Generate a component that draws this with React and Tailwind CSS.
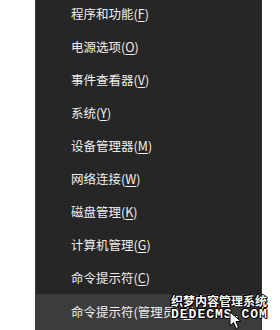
const items = [
  ['程序和功能', 'F'],
  ['电源选项', 'O'],
  ['事件查看器', 'V'],
  ['系统', 'Y'],
  ['设备管理器', 'M'],
  ['网络连接', 'W'],
  ['磁盘管理', 'K'],
  ['计算机管理', 'G'],
  ['命令提示符', 'C'],
  ['命令提示符(管理员)', 'A'],
];

export default function App() {
  return (
    <div className="w-[280px] h-[330px] bg-white relative overflow-hidden font-['Noto_Sans_CJK_SC','Microsoft_YaHei',sans-serif]">
      <div className="ml-[35px] w-[227px] h-[332px] bg-[#262626] border-l border-[#3a3a3a] border-r border-r-[#333] -mt-[2px] flex flex-col">
        {items.map(([label, key], i) => (
          <div
            key={i}
            className={`h-[33px] shrink-0 flex items-center pl-[35px] text-[12.5px] text-[#efefef] ${i === items.length - 1 ? 'bg-[#3c3c3c] mt-[-1px] h-[36px]' : ''}`}
          >
            {label}(<span className="underline underline-offset-2">{key}</span>)
          </div>
        ))}
      </div>

      {/* watermark */}
      <div className="absolute left-[171px] top-[295px] text-white leading-none [text-shadow:1px_0_0_#000,-1px_0_0_#000,0_1px_0_#000,0_-1px_0_#000,1px_1px_0_#000,-1px_-1px_0_#000]">
        <div className="text-[12px] font-bold">织梦内容管理系统</div>
        <div className="mt-[1px] text-[13px] font-bold font-['Liberation_Mono',monospace] tracking-[1px]">DEDECMS.COM</div>
      </div>

      {/* cursor */}
      <svg className="absolute left-[229px] top-[311px]" width="14" height="20" viewBox="0 0 14 20">
        <path d="M1 1 L1 15 L4.5 11.5 L7 17.5 L9.5 16.5 L7 10.5 L12 10.5 Z" fill="#fff" stroke="#000" strokeWidth="1" strokeLinejoin="round" />
      </svg>
    </div>
  );
}
